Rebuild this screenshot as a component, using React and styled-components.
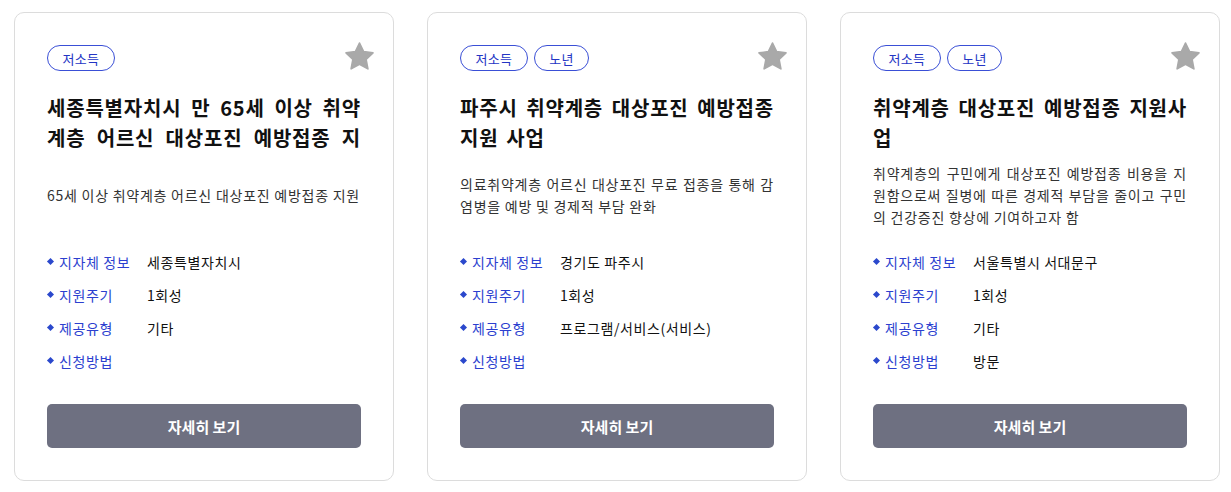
import React from "react";
import styled, { createGlobalStyle } from "styled-components";

const GlobalStyle = createGlobalStyle`
  html, body {
    margin: 0;
    padding: 0;
    background: #ffffff;
    font-family: "Noto Sans CJK KR", "Noto Sans", sans-serif;
    color: #111;
  }
  * { box-sizing: border-box; }
`;

const Page = styled.div`
  display: grid;
  grid-template-columns: repeat(3, 380px);
  column-gap: 33px;
  padding: 12px 0 0 14px;
`;

const Card = styled.article`
  position: relative;
  display: flex;
  flex-direction: column;
  width: 380px;
  height: 469px;
  padding: 32px;
  border: 1px solid #dcdcdc;
  border-radius: 10px;
  background: #fff;
`;

const TagRow = styled.div`
  display: flex;
  gap: 6px;
  height: 26px;
`;

const Tag = styled.span`
  display: inline-flex;
  align-items: center;
  justify-content: center;
  height: 26px;
  padding: 0 14.5px;
  border: 1px solid #3a4fd6;
  border-radius: 13px;
  font-size: 13px;
  letter-spacing: 0.3px;
  color: #2435c4;
  line-height: 1;
`;

const StarButton = styled.button`
  position: absolute;
  top: 27px;
  right: 17px;
  width: 33px;
  height: 33px;
  padding: 0;
  border: 0;
  background: none;
  display: flex;
  align-items: center;
  justify-content: center;
  cursor: pointer;
`;

const Title = styled.h2`
  margin: 22px 0 0;
  font-size: 20px;
  font-weight: 700;
  line-height: 30px;
  letter-spacing: 0.8px;
  word-spacing: 2.5px;
  height: 60px;
  overflow: hidden;
  text-align: justify;
  color: #111;
`;

const DescBox = styled.div`
  margin-top: 6px;
  height: 72px;
  display: flex;
  align-items: center;
`;

const Desc = styled.p`
  margin: 0;
  font-size: 14px;
  line-height: 22px;
  letter-spacing: 0.75px;
  color: #333;
  text-align: justify;
`;

const InfoList = styled.ul`
  list-style: none;
  margin: 14px 0 0;
  padding: 0;
`;

const InfoRow = styled.li`
  display: flex;
  align-items: center;
  height: 33px;
  font-size: 14px;
  letter-spacing: 0.6px;
`;

const Bullet = styled.span`
  width: 5px;
  height: 5px;
  background: #2b48cc;
  transform: rotate(45deg);
  margin: 0 6px 0 1px;
  flex: none;
`;

const Label = styled.span`
  width: 88px;
  flex: none;
  color: #2c3fcf;
`;

const Value = styled.span`
  color: #111;
`;

const DetailButton = styled.button`
  margin-top: 27px;
  height: 44px;
  width: 100%;
  border: 0;
  border-radius: 5px;
  background: #6e7081;
  color: #fff;
  font-family: inherit;
  font-size: 15px;
  font-weight: 700;
  cursor: pointer;
`;

const StarIcon = () => (
  <svg width="33" height="33" viewBox="0 0 24 24" aria-hidden="true">
    <polygon
      points="12,2.2 15,8.5 21.8,9.4 16.8,14.1 18.1,21 12,17.6 5.9,21 7.2,14.1 2.2,9.4 9,8.5"
      fill="#a9a9a9"
      stroke="#a9a9a9"
      strokeWidth="1.2"
      strokeLinejoin="round"
    />
  </svg>
);

const cards = [
  {
    tags: ["저소득"],
    title: "세종특별자치시 만 65세 이상 취약계층 어르신 대상포진 예방접종 지원",
    desc: "65세 이상 취약계층 어르신 대상포진 예방접종 지원",
    info: [
      ["지자체 정보", "세종특별자치시"],
      ["지원주기", "1회성"],
      ["제공유형", "기타"],
      ["신청방법", ""],
    ],
  },
  {
    tags: ["저소득", "노년"],
    title: "파주시 취약계층 대상포진 예방접종 지원 사업",
    desc: "의료취약계층 어르신 대상포진 무료 접종을 통해 감염병을 예방 및 경제적 부담 완화",
    info: [
      ["지자체 정보", "경기도 파주시"],
      ["지원주기", "1회성"],
      ["제공유형", "프로그램/서비스(서비스)"],
      ["신청방법", ""],
    ],
  },
  {
    tags: ["저소득", "노년"],
    title: "취약계층 대상포진 예방접종 지원사업",
    desc: "취약계층의 구민에게 대상포진 예방접종 비용을 지원함으로써 질병에 따른 경제적 부담을 줄이고 구민의 건강증진 향상에 기여하고자 함",
    info: [
      ["지자체 정보", "서울특별시 서대문구"],
      ["지원주기", "1회성"],
      ["제공유형", "기타"],
      ["신청방법", "방문"],
    ],
  },
];

export default function App() {
  return (
    <>
      <GlobalStyle />
      <Page>
        {cards.map((c, i) => (
          <Card key={i}>
            <TagRow>
              {c.tags.map((t) => (
                <Tag key={t}>{t}</Tag>
              ))}
            </TagRow>
            <StarButton aria-label="즐겨찾기">
              <StarIcon />
            </StarButton>
            <Title>{c.title}</Title>
            <DescBox>
              <Desc>{c.desc}</Desc>
            </DescBox>
            <InfoList>
              {c.info.map(([l, v]) => (
                <InfoRow key={l}>
                  <Bullet />
                  <Label>{l}</Label>
                  <Value>{v}</Value>
                </InfoRow>
              ))}
            </InfoList>
            <DetailButton>자세히 보기</DetailButton>
          </Card>
        ))}
      </Page>
    </>
  );
}
